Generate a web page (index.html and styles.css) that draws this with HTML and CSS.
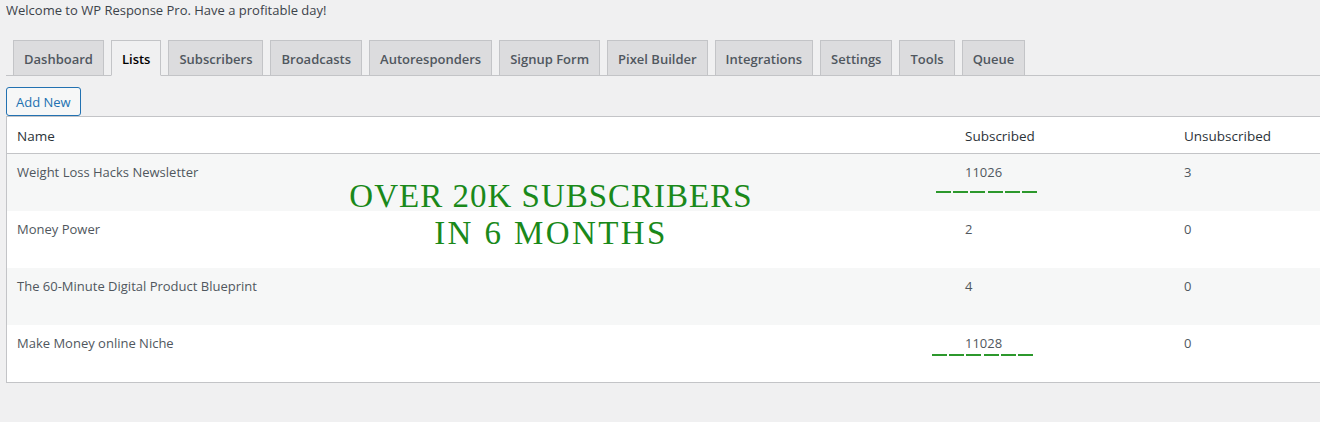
FILE: index.html
```html
<!DOCTYPE html>
<html lang="en">
<head>
    <meta charset="UTF-8">
    <title>WP Response Pro - Lists</title>
    <link rel="stylesheet" href="styles.css">
</head>
<body>

<p class="welcome">Welcome to WP Response Pro. Have a profitable day!</p>

<!-- tabs -->
<nav class="nav-tab-wrapper">
    <a class="nav-tab">Dashboard</a>
    <a class="nav-tab nav-tab-active">Lists</a>
    <a class="nav-tab">Subscribers</a>
    <a class="nav-tab">Broadcasts</a>
    <a class="nav-tab">Autoresponders</a>
    <a class="nav-tab">Signup Form</a>
    <a class="nav-tab">Pixel Builder</a>
    <a class="nav-tab">Integrations</a>
    <a class="nav-tab">Settings</a>
    <a class="nav-tab">Tools</a>
    <a class="nav-tab">Queue</a>
</nav>

<button class="button">Add New</button>

<div class="list-wrap">
    <table class="widefat">
        <thead>
            <tr>
                <th class="col-name">Name</th>
                <th class="col-sub">Subscribed</th>
                <th class="col-unsub">Unsubscribed</th>
            </tr>
        </thead>
        <tbody>
            <tr class="alt">
                <td>Weight Loss Hacks Newsletter</td>
                <td>
                    <span class="count">11026
                        <span class="dashes dashes-low"><i></i><i></i><i></i><i></i><i></i><i></i></span>
                    </span>
                </td>
                <td>3</td>
            </tr>
            <tr>
                <td>Money Power</td>
                <td>2</td>
                <td>0</td>
            </tr>
            <tr class="alt">
                <td>The 60-Minute Digital Product Blueprint</td>
                <td>4</td>
                <td>0</td>
            </tr>
            <tr>
                <td>Make Money online Niche</td>
                <td>
                    <span class="count">11028
                        <span class="dashes dashes-under"><i></i><i></i><i></i><i></i><i></i><i></i></span>
                    </span>
                </td>
                <td>0</td>
            </tr>
        </tbody>
    </table>

    <!-- annotation over the table -->
    <div class="promo">
        <div class="promo-line">Over 20K Subscribers</div>
        <div class="promo-line promo-wide">in 6 Months</div>
    </div>
</div>

</body>
</html>
```

FILE: styles.css
```css
body {
    margin: 0 0 0 6px;
    background: #f0f0f1;
    color: #3c434a;
    font-family: "Open Sans", "Noto Sans", sans-serif;
    font-size: 13px;
    overflow: hidden;
}
.welcome {
    margin: 0;
    padding-top: 1px;
    line-height: 18px;
}
.nav-tab-wrapper {
    display: flex;
    margin-top: 21px;
    border-bottom: 1px solid #c3c4c7;
}
.nav-tab {
    margin-left: 7px;
    margin-bottom: -1px;
    padding: 6px 10px 4px;
    border: 1px solid #c3c4c7;
    background: #dcdcde;
    color: #50575e;
    font-size: 13px;
    font-weight: 600;
    line-height: 24px;
    white-space: nowrap;
}
.nav-tab-active {
    background: #f0f0f1;
    border-bottom-color: #f0f0f1;
    color: #000;
}
.button {
    margin-top: 11px;
    height: 29px;
    padding: 0 9px;
    border: 1px solid #2271b1;
    border-radius: 3px;
    background: #f6f7f7;
    color: #2271b1;
    font-family: inherit;
    font-size: 13px;
    cursor: pointer;
}
.list-wrap {
    position: relative;
    overflow: hidden;
}
.widefat {
    width: 1420px;
    border-collapse: collapse;
    border: 1px solid #c3c4c7;
    background: #fff;
}
.widefat th {
    padding: 9px 10px 7px;
    text-align: left;
    font-weight: 400;
    font-size: 13.5px;
    line-height: 20px;
    color: #2c3338;
    border-bottom: 1px solid #c3c4c7;
}
.widefat td {
    height: 41px;
    padding: 8px 10px;
    vertical-align: top;
    line-height: 20px;
    color: #50575e;
}
.widefat .alt {
    background: #f6f7f7;
}
.col-name {
    width: 928px;
}
.col-sub {
    width: 199px;
}
.count {
    position: relative;
}
.dashes {
    position: absolute;
    display: flex;
    width: 101px;
    gap: 2.2px;
}
.dashes i {
    flex: none;
    width: 15px;
    height: 2px;
    background: #2c982c;
}
.dashes-low {
    left: -29px;
    top: 28px;
}
.dashes-under {
    left: -33px;
    top: 20px;
}
.promo {
    position: absolute;
    left: 294px;
    top: 62px;
    width: 502px;
    text-align: center;
    font-family: "Liberation Serif", serif;
    font-size: 33px;
    line-height: 37px;
    text-transform: uppercase;
    color: #1a891a;
}
.promo-line {
    letter-spacing: 1px;
}
.promo-wide {
    letter-spacing: 2.4px;
}
```
